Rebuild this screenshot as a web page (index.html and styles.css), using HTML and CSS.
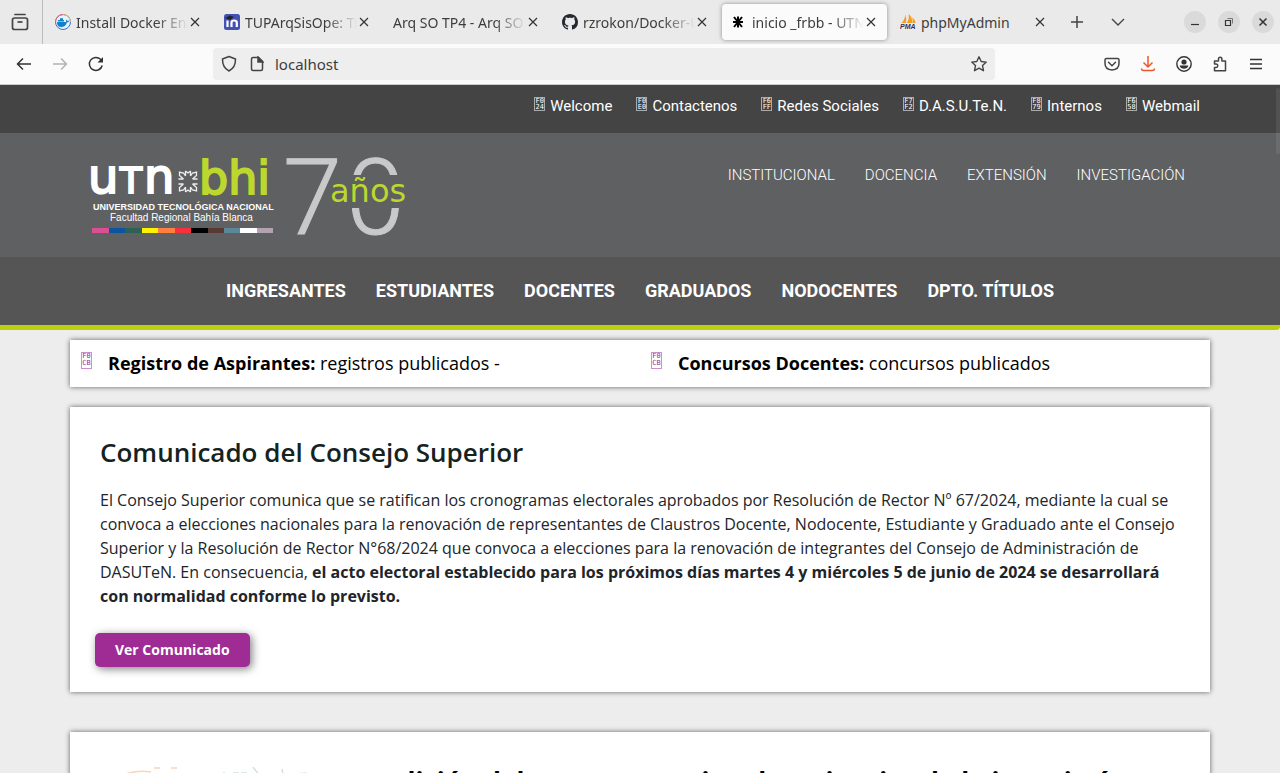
FILE: index.html
```html
<!DOCTYPE html>
<html lang="es">
<head>
<meta charset="utf-8">
<title>inicio _frbb - UTN</title>
<link rel="stylesheet" href="styles.css">
</head>
<body>
<svg class="defs" aria-hidden="true">
  <symbol id="x" viewBox="0 0 10 10"><path d="M1 1l8 8M9 1L1 9" fill="none" stroke="#333" stroke-width="1.2"/></symbol>
</svg>
<div class="tabbar">
  <button class="pinned" aria-label="Ver pestañas recientes"><svg width="18" height="18" viewBox="0 0 18 18" fill="none" stroke="#444" stroke-width="1.7"><path d="M4 1.5h10" stroke-linecap="round"/><rect x="1.5" y="5" width="15" height="11.5" rx="2"/><path d="M6.500 9h5"/></svg></button>
  <div class="tabs">
    <div class="tab">
      <svg class="fav" viewBox="0 0 16 16"><circle cx="8" cy="8" r="7.500" fill="#e8f2fb" stroke="#3c6fc4"/><path d="M.5 8A7.500 7.500 0 0 1 8 .5" fill="none" stroke="#f06a6a"/><path d="M8 .5A7.500 7.500 0 0 1 15.500 8" fill="none" stroke="#f3b45a"/><path d="M2 8h9c.4-1 .3-1.700-.2-2.400.9.1 1.400.6 1.600 1.300.7-.1 1.300 0 1.800.3-.4.8-1.100 1.100-2.200 1.100C11 11.700 9 13 6.200 13 3.400 13 1.800 11 2 8z" fill="#1182c9"/><path d="M3 6h6v1.600H3zM5 4.200h3V6H5z" fill="#1182c9"/></svg>
      <span class="title">Install Docker Engine</span><button class="close" aria-label="Cerrar"><svg><use href="#x"/></svg></button></div>
    <div class="tab">
      <svg class="fav" viewBox="0 0 16 16"><rect width="16" height="16" rx="2.500" fill="#4550b5"/><path d="M3.500 6.500V13M7.500 13V8.500q0-2 2.500-2 2.800 0 2.800 2V13" fill="none" stroke="#fff" stroke-width="2.200"/><path d="M1 4l5-2.500 4 1.500-4 3z" fill="#222"/></svg>
      <span class="title">TUPArqSisOpe: Trabajo</span><button class="close" aria-label="Cerrar"><svg><use href="#x"/></svg></button></div>
    <div class="tab"><span class="title">Arq SO TP4 - Arq SO TP</span><button class="close" aria-label="Cerrar"><svg><use href="#x"/></svg></button></div>
    <div class="tab">
      <svg class="fav" viewBox="0 0 16 16"><path fill="#24292f" d="M8 0C3.580 0 0 3.580 0 8c0 3.540 2.290 6.530 5.470 7.590.4.070.55-.17.55-.38 0-.19-.01-.82-.01-1.490-2.010.37-2.530-.49-2.690-.94-.09-.23-.48-.94-.82-1.130-.28-.15-.68-.52-.01-.53.63-.01 1.080.58 1.230.82.72 1.210 1.870.87 2.330.66.07-.52.28-.87.510-1.070-1.780-.2-3.640-.89-3.640-3.950 0-.87.31-1.590.82-2.150-.08-.2-.36-1.020.08-2.120 0 0 .67-.21 2.200.82.640-.18 1.320-.27 2-.27s1.360.09 2 .27c1.530-1.040 2.200-.82 2.200-.82.44 1.100.16 1.920.08 2.120.51.56.82 1.270.82 2.150 0 3.070-1.870 3.750-3.650 3.950.29.25.54.73.54 1.480 0 1.070-.01 1.930-.01 2.200 0 .21.15.46.55.38A8.010 8.010 0 0 0 16 8c0-4.420-3.580-8-8-8z"/></svg>
      <span class="title">rzrokon/Docker-UTN</span><button class="close" aria-label="Cerrar"><svg><use href="#x"/></svg></button></div>
    <div class="tab active">
      <svg class="fav" viewBox="0 0 16 16"><path d="M7 2.500v11M2 8h10M3 3l8 10M11 3L3 13" stroke="#000" stroke-width="2"/></svg>
      <span class="title">inicio _frbb - UTN FRBB</span><button class="close" aria-label="Cerrar"><svg><use href="#x"/></svg></button></div>
    <div class="tab">
      <svg class="fav" viewBox="0 0 16 16"><path d="M1.500 9Q5 6 5.200.5 7 5 6 9zM7 9Q9.500 5 8.800 0 13 4 12 9zM12.500 9Q13.500 6 12 3.500 15 5 15.500 9z" fill="#f89c1c"/><text x="0" y="15" class="pma">PMA</text></svg>
      <span class="title">phpMyAdmin</span><button class="close" aria-label="Cerrar"><svg><use href="#x"/></svg></button></div>
  </div>
  <div class="tabtools">
    <button aria-label="Nueva pestaña"><svg width="14" height="14" viewBox="0 0 14 14"><path d="M7 1v12M1 7h12" stroke="#444" stroke-width="1.500"/></svg></button>
    <button aria-label="Listar pestañas"><svg width="14" height="14" viewBox="0 0 14 14"><path d="M1 4l6 6 6-6" fill="none" stroke="#444" stroke-width="1.400"/></svg></button>
  </div>
  <div class="wincontrols">
    <button aria-label="Minimizar"><svg width="10" height="10" viewBox="0 0 10 10"><path d="M1 7.500h8" stroke="#333" stroke-width="1.200"/></svg></button>
    <button aria-label="Restaurar"><svg width="10" height="10" viewBox="0 0 10 10" fill="none" stroke="#333"><path d="M1.500 3.500h5v5h-5z" stroke-width="1.200"/><path d="M3.500 1.500h5v5" stroke="#777"/></svg></button>
    <button aria-label="Cerrar ventana"><svg width="10" height="10" viewBox="0 0 10 10"><path d="M1.500 1.500l7 7M8.500 1.500l-7 7" stroke="#333" stroke-width="1.500"/></svg></button>
  </div>
</div>
<div class="toolbar">
  <div class="history">
    <button aria-label="Atrás"><svg width="16" height="16" viewBox="0 0 16 16" fill="none" stroke="#333" stroke-width="1.500"><path d="M15 8H1.500M7 2.500L1.500 8 7 13.500"/></svg></button>
    <button aria-label="Adelante" disabled><svg width="16" height="16" viewBox="0 0 16 16" fill="none" stroke="#b3b3b3" stroke-width="1.500"><path d="M1 8h13.500M9 2.500L14.500 8 9 13.500"/></svg></button>
    <button aria-label="Recargar"><svg width="16" height="16" viewBox="0 0 16 16" fill="none" stroke="#333" stroke-width="1.500"><path d="M14.200 9.500A6.500 6.500 0 1 1 12.500 3.300L14 5"/><path d="M15 1v5.500H9.500z" fill="#333" stroke="none"/></svg></button>
  </div>
  <div class="urlbar">
    <svg width="16" height="18" viewBox="0 0 16 18" fill="none" stroke="#444" stroke-width="1.500"><path d="M8 1.500L14.500 4q.2 8.500-6.500 12Q1.300 12.500 1.500 4z" stroke-linejoin="round"/></svg>
    <svg width="14" height="16" viewBox="0 0 14 16" fill="none" stroke="#444" stroke-width="1.500"><path d="M3 1.500h5.500l4 4V13q0 1.500-1.500 1.500H3Q1.500 14.500 1.500 13V3Q1.500 1.500 3 1.500z"/><path d="M8 1v5h5z" fill="#444"/></svg>
    <input type="text" value="localhost" aria-label="Dirección">
    <svg width="18" height="18" viewBox="0 0 18 18" fill="none" stroke="#444" stroke-width="1.400" stroke-linejoin="round"><path d="M9 1.800l2.200 4.700 5.100.6-3.800 3.500 1 5.100L9 13.200l-4.500 2.500 1-5.100L1.700 7.100l5.100-.6z"/></svg>
  </div>
  <div class="actions">
    <button aria-label="Pocket"><svg width="16" height="16" viewBox="0 0 16 16" fill="none" stroke="#444" stroke-width="1.500"><path d="M2.500 2.500h11q1.500 0 1.500 1.500v3.500q0 6-7 6.500Q1 13.500 1 7.500V4q0-1.500 1.500-1.500z"/><path d="M4.500 6.300L8 9.700l3.500-3.400" stroke-linecap="round"/></svg></button>
    <button aria-label="Descargas"><svg width="16" height="16" viewBox="0 0 16 16" fill="none" stroke="#f0562b" stroke-width="1.500"><path d="M8 0v11M3.500 6.500L8 11l4.500-4.500M1.500 12.500q0 2 2 2h9q2 0 2-2"/></svg></button>
    <button aria-label="Cuenta"><svg width="16" height="16" viewBox="0 0 16 16"><circle cx="8" cy="8" r="7.200" fill="none" stroke="#333" stroke-width="1.400"/><circle cx="8" cy="6" r="2.600" fill="#333"/><path d="M3.600 9.500h8.800Q11.500 12.800 8 12.800T3.600 9.500z" fill="#333"/></svg></button>
    <button aria-label="Extensiones"><svg width="16" height="16" viewBox="0 0 16 16" fill="none" stroke="#444" stroke-width="1.500" stroke-linejoin="round"><path d="M2.500 8V5h4V3q0-1.800 1.700-1.800T9.900 3v2h3.600v9.800h-11v-3.300h1.700q1.600 0 1.600-1.700T4.200 8z"/></svg></button>
    <button aria-label="Menú"><svg width="16" height="16" viewBox="0 0 16 16"><path d="M2 3.500h12M2 8h12M2 12.500h12" stroke="#333" stroke-width="1.300"/></svg></button>
  </div>
</div>

<div class="page">
  <div class="scroll-thumb"></div>
  <header>
    <nav class="top-links">
      <a href="#"><span class="hex">F0<br>24</span>Welcome</a>
      <a href="#"><span class="hex">F0<br>E0</span>Contactenos</a>
      <a href="#"><span class="hex">F6<br>FF</span>Redes Sociales</a>
      <a href="#"><span class="hex">F7<br>F2</span>D.A.S.U.Te.N.</a>
      <a href="#"><span class="hex">F8<br>79</span>Internos</a>
      <a href="#"><span class="hex">F6<br>58</span>Webmail</a>
    </nav>
    <div class="brand-row">
      <a class="logo" href="#" aria-label="UTN Bahía Blanca">
        <svg width="340" height="90" viewBox="0 0 340 90">
          <g class="utn"><text x="8" y="40">u</text><text x="40" y="40" class="tee">T</text><text x="64" y="40">n</text></g>
          <g fill="none" stroke="#eee" stroke-width="1.300" transform="translate(5 -3)"><path d="M100.500 21v5M105.500 21v5M100.500 42v-5M105.500 42v-5M93.500 29h5M93.500 34h5M112.500 29h-5M112.500 34h-5M100.500 26l-2-3-4-1v3.500l4 3.500M105.500 26l2-3 4-1v3.500l-4 3.500M100.500 37l-2 3-4 1v-3.500l4-3.500M105.500 37l2 3 4 1v-3.500l-4-3.500M100.500 21l2.500 2 2.500-2M100.500 42l2.500-2 2.500 2"/></g>
          <text x="119" y="41" class="bhi">bhi</text>
          <text x="13" y="57" class="uni">UNIVERSIDAD TECNOLÓGICA NACIONAL</text>
          <text x="30" y="68" class="fac">Facultad Regional Bahía Blanca</text>
          <g transform="translate(0 -3)"><path fill="#d94f91" d="M12 78h17v5H12z"/><path fill="#0c54a0" d="M29 78h16v5H29z"/><path fill="#2e6156" d="M45 78h17v5H45z"/><path fill="#fff200" d="M62 78h16v5H62z"/><path fill="#ff7f41" d="M78 78h17v5H78z"/><path fill="#f9303c" d="M95 78h16v5H95z"/><path fill="#000" d="M111 78h17v5h-17z"/><path fill="#573a36" d="M128 78h16v5h-16z"/><path fill="#5c8799" d="M144 78h16v5h-16z"/><path fill="#fff" d="M160 78h17v5h-17z"/><path fill="#b3a3b1" d="M177 78h16v5h-16z"/></g>
          <text x="203" y="81" class="seventy">7</text>
          <text x="266" y="81" class="seventy">0</text>
          <path d="M262 22h78v33h-89z" fill="#5f6062"/>
          <text x="250" y="49" class="years">años</text>
        </svg>
      </a>
      <nav class="sections">
        <a href="#">INSTITUCIONAL</a><a href="#">DOCENCIA</a><a href="#">EXTENSIÓN</a><a href="#">INVESTIGACIÓN</a>
      </nav>
    </div>
    <nav class="audience">
      <a href="#">INGRESANTES</a><a href="#">ESTUDIANTES</a><a href="#">DOCENTES</a><a href="#">GRADUADOS</a><a href="#">NODOCENTES</a><a href="#">DPTO. TÍTULOS</a>
    </nav>
  </header>
  <main>
    <section class="card notices">
      <p><span class="hex purple">F0<br>CB</span><span><b>Registro de Aspirantes:</b> registros publicados -</span></p>
      <p><span class="hex purple">F0<br>CB</span><span><b>Concursos Docentes:</b> concursos publicados</span></p>
    </section>
    <section class="card statement">
      <h2>Comunicado del Consejo Superior</h2>
      <p>El Consejo Superior comunica que se ratifican los cronogramas electorales aprobados por Resolución de Rector Nº 67/2024, mediante la cual se convoca a elecciones nacionales para la renovación de representantes de Claustros Docente, Nodocente, Estudiante y Graduado ante el Consejo Superior y la Resolución de Rector N°68/2024 que convoca a elecciones para la renovación de integrantes del Consejo de Administración de DASUTeN. En consecuencia, <b>el acto electoral establecido para los próximos días martes 4 y miércoles 5 de junio de 2024 se desarrollará con normalidad conforme lo previsto.</b></p>
      <button class="primary">Ver Comunicado</button>
    </section>
    <section class="card event">
      <svg width="200" height="120" viewBox="0 0 200 120" fill="none" stroke-width="1.500"><path d="M0 7Q14 3 26 5M29 1h6M46 1h6" stroke="#f8d5bf"/><path d="M99 5v10M108 6h6M116 6h6M128 0l6 8M157 2l2 10M170 7l12-1" stroke="#cfe5d2"/></svg>
      <h2>2 edición del congreso nacional en ciencias de la ingeniería</h2>
    </section>
  </main>
</div>
</body>
</html>
```
FILE: styles.css
```css
* { box-sizing: border-box; }
body { margin: 0; height: 100vh; display: flex; flex-direction: column; overflow: hidden; font-family: "Open Sans", sans-serif; background: #ededed; }
a { color: inherit; text-decoration: none; }
button { border: 0; padding: 0; background: none; font: inherit; display: flex; align-items: center; justify-content: center; }
svg { display: block; flex: none; }
.defs { width: 0; height: 0; position: absolute; }

.tabbar { display: flex; align-items: center; height: 44px; flex: none; background: #eaeaea; font: 14px "Noto Sans", sans-serif; color: #3d3d3d; }
.pinned { width: 43px; height: 44px; flex: none; border-right: 1px solid #bbb; padding-right: 3px; }
.tabs { display: flex; gap: 4px; padding-left: 3px; }
.tab { width: 165px; height: 36px; padding: 0 11px 0 9px; display: flex; align-items: center; border-radius: 4px; }
.tab.active { background: #fbfbfb; box-shadow: 0 0 4px rgba(0, 0, 0, .4); }
.fav { width: 16px; height: 16px; margin-right: 5px; }
.pma { font: italic bold 7px "Liberation Sans", sans-serif; fill: #34305e; }
.title { flex: 1; min-width: 0; overflow: hidden; white-space: nowrap; mask-image: linear-gradient(to left, transparent, #000 32px); }
.tab:last-child .title { mask-image: none; }
.close { width: 10px; height: 10px; margin-left: 2px; flex: none; }
.close svg { width: 10px; height: 10px; }
.tabtools { display: flex; gap: 27px; padding-left: 14px; }
.wincontrols { display: flex; gap: 12px; margin-left: auto; padding-right: 6px; }
.wincontrols button { width: 22px; height: 22px; border-radius: 50%; background: #dadada; }

.toolbar { display: flex; align-items: center; height: 41px; flex: none; background: #fbfbfb; border-bottom: 1px solid #ccc; font: 15px "Noto Sans", sans-serif; }
.history { display: flex; gap: 20px; padding-left: 16px; width: 213px; }
.urlbar { display: flex; align-items: center; flex: 1; height: 32px; padding: 0 7px 0 8px; background: #eee; border-radius: 4px; }
.urlbar svg:nth-child(2) { margin-left: 13px; }
.urlbar input { flex: 1; border: 0; padding: 0; margin-left: 11px; background: none; font: inherit; color: #3d3d3d; outline: 0; }
.actions { display: flex; justify-content: flex-end; gap: 20px; width: 285px; padding-right: 16px; }

.page { flex: 1; min-height: 0; overflow: hidden; position: relative; }
.scroll-thumb { position: absolute; right: 0; top: 3px; width: 4px; height: 66px; border-radius: 2px; background: rgba(255, 255, 255, .08); }
header { font-family: Roboto, sans-serif; color: #fff; border-bottom: 5px solid #bbcf0e; border-bottom-right-radius: 4px; background: #555; }
.top-links { display: flex; justify-content: flex-end; gap: 24px; height: 48px; padding: 9px 80px 0 0; background: #444; font-size: 15px; line-height: 24px; }
.top-links a { display: flex; }
.hex { flex: none; width: 11px; height: 14px; margin: 3px 5px 0 0; border: 1px solid #aaa; font: 7px/6px "DejaVu Sans Mono", monospace; text-align: center; }
.brand-row { display: flex; justify-content: space-between; height: 124px; padding: 20px 95px 0 80px; background: #5f6062; }
.sections { display: flex; gap: 30px; padding-top: 10px; font-size: 15px; font-weight: 300; line-height: 24px; }
.audience { display: flex; justify-content: center; gap: 30px; height: 68px; font-size: 18px; font-weight: 700; line-height: 68px; }

.utn text { font: 48px "DejaVu Sans", sans-serif; fill: #fff; stroke: #fff; stroke-width: 2px; }
.utn .tee { font-size: 36px; }
.bhi { font: 46px "DejaVu Sans", sans-serif; fill: #bcd82e; stroke: #bcd82e; stroke-width: 2px; }
.uni { font: bold 9px "Liberation Sans", sans-serif; fill: #fff; }
.fac { font: 10px "Liberation Sans", sans-serif; fill: #fff; }
.seventy { font: 300 106px Roboto, sans-serif; fill: #c9c9c9; stroke: #c9c9c9; stroke-width: 1px; }
.years { font: 32px "DejaVu Sans", sans-serif; fill: #bcd82e; }

main { max-width: 1140px; margin: 0 auto; padding-top: 10px; }
.card { background: #fff; box-shadow: 0 0 5px rgba(0, 0, 0, .6); }
.notices { display: grid; grid-template-columns: 1fr 1fr; height: 47px; margin-bottom: 20px; color: #000; font-size: 18px; line-height: 47px; }
.notices p { display: flex; margin: 0; padding-left: 11px; }
.hex.purple { color: #9c2c96; border-color: #cc8fd0; height: 17px; margin: 12px 16px 0 0; line-height: 7px; }
.statement { padding: 30px 30px 25px; margin-bottom: 40px; color: #212529; font-size: 16px; line-height: 24px; }
h2 { margin: 0; font-size: 26px; line-height: 31px; font-weight: 600; color: #15231f; }
.statement p { margin: 20px 0 25px; }
.primary { height: 34px; margin-left: -5px; padding: 0 20px; border-radius: 5px; background: #9f2b94; color: #fff; font-size: 14px; font-weight: 700; box-shadow: 2px 2px 8px rgba(0, 0, 0, .5); }
.event { display: flex; gap: 37px; padding: 35px 30px 30px 55px; }
.event h2 { font-size: 26px; line-height: 30px; font-weight: 700; color: #000; white-space: nowrap; }
```
